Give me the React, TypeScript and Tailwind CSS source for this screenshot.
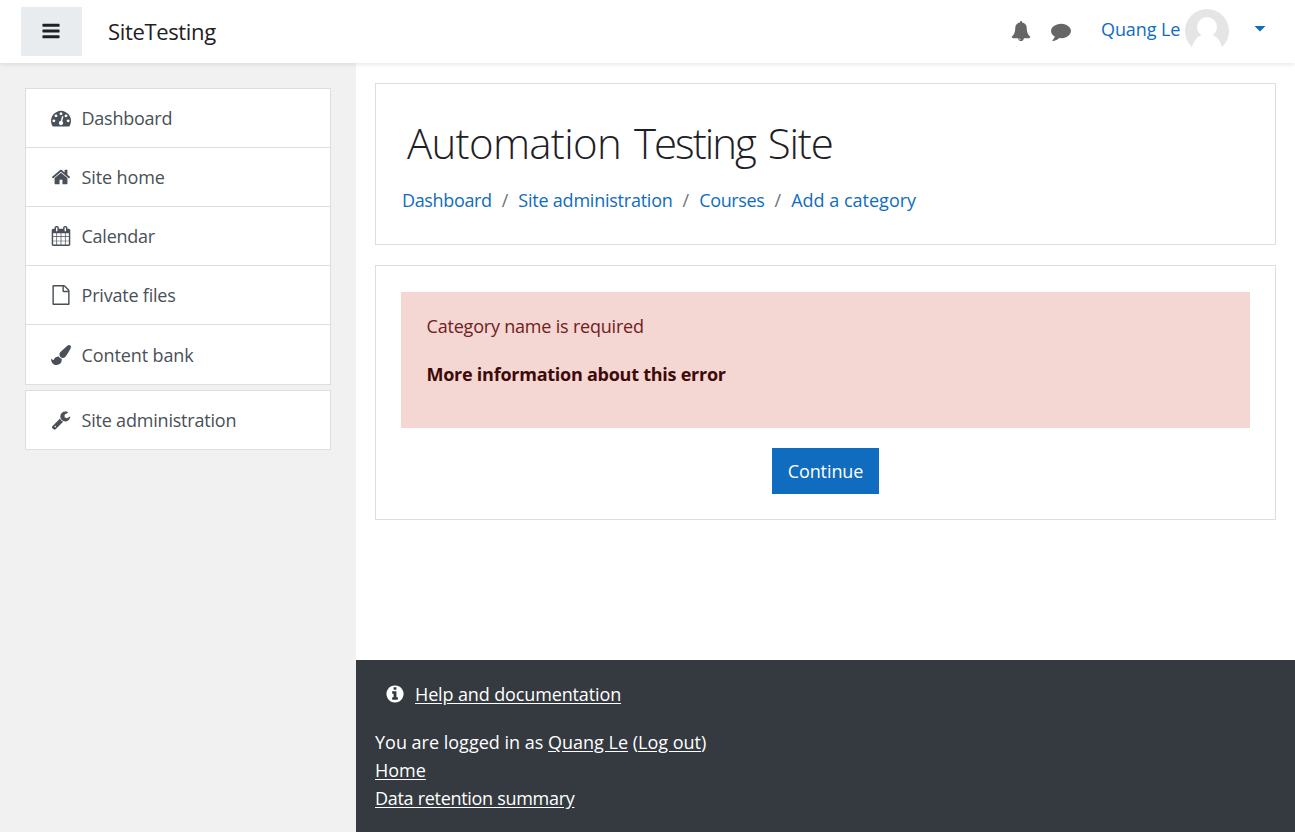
const ICONS = {
  bars: "M1664 1344v128q0 26-19 45t-45 19h-1408q-26 0-45-19t-19-45v-128q0-26 19-45t45-19h1408q26 0 45 19t19 45zm0-512v128q0 26-19 45t-45 19h-1408q-26 0-45-19t-19-45v-128q0-26 19-45t45-19h1408q26 0 45 19t19 45zm0-512v128q0 26-19 45t-45 19h-1408q-26 0-45-19t-19-45v-128q0-26 19-45t45-19h1408q26 0 45 19t19 45z",
  gauge: "M384 1152q0-53-37.5-90.5t-90.5-37.5-90.5 37.5-37.5 90.5 37.5 90.5 90.5 37.5 90.5-37.5 37.5-90.5zm192-448q0-53-37.5-90.5t-90.5-37.5-90.5 37.5-37.5 90.5 37.5 90.5 90.5 37.5 90.5-37.5 37.5-90.5zm428 481l101-382q6-26-7.5-48.5t-38.5-29.5-48 6.5-30 39.5l-101 382q-60 5-107 43.5t-63 98.5q-20 77 20 146t117 89 146-20 89-117q16-60-6-117t-72-91zm660-33q0-53-37.5-90.5t-90.5-37.5-90.5 37.5-37.5 90.5 37.5 90.5 90.5 37.5 90.5-37.5 37.5-90.5zm-640-640q0-53-37.5-90.5t-90.5-37.5-90.5 37.5-37.5 90.5 37.5 90.5 90.5 37.5 90.5-37.5 37.5-90.5zm448 192q0-53-37.5-90.5t-90.5-37.5-90.5 37.5-37.5 90.5 37.5 90.5 90.5 37.5 90.5-37.5 37.5-90.5zm320 448q0 261-141 483-19 29-54 29h-1402q-35 0-54-29-141-221-141-483 0-182 71-348t191-286 286-191 348-71 348 71 286 191 191 286 71 348z",
  home: "M1472 992v480q0 26-19 45t-45 19h-384v-384h-256v384h-384q-26 0-45-19t-19-45v-480q0-1 .5-3t.5-3l575-474 575 474q1 2 1 6zm223-69l-62 74q-8 9-21 11h-3q-13 0-21-7l-692-577-692 577q-12 8-24 7-13-2-21-11l-62-74q-8-10-7-23.5t11-21.5l719-599q32-26 76-26t76 26l244 204v-195q0-14 9-23t23-9h192q14 0 23 9t9 23v408l219 182q10 8 11 21.5t-7 23.5z",
  calendar: "M192 1664h288v-288h-288v288zm352 0h320v-288h-320v288zm-352-352h288v-320h-288v320zm352 0h320v-320h-320v320zm-352-384h288v-288h-288v288zm736 736h320v-288h-320v288zm-384-736h320v-288h-320v288zm768 736h288v-288h-288v288zm-384-352h320v-320h-320v320zm-352-864v-288q0-13-9.5-22.5t-22.5-9.5h-64q-13 0-22.5 9.5t-9.5 22.5v288q0 13 9.5 22.5t22.5 9.5h64q13 0 22.5-9.5t9.5-22.5zm736 864h288v-320h-288v320zm-384-384h320v-288h-320v288zm384 0h288v-288h-288v288zm32-480v-288q0-13-9.5-22.5t-22.5-9.5h-64q-13 0-22.5 9.5t-9.5 22.5v288q0 13 9.5 22.5t22.5 9.5h64q13 0 22.5-9.5t9.5-22.5zm384-64v1280q0 52-38 90t-90 38h-1408q-52 0-90-38t-38-90v-1280q0-52 38-90t90-38h128v-96q0-66 47-113t113-47h64q66 0 113 47t47 113v96h384v-96q0-66 47-113t113-47h64q66 0 113 47t47 113v96h128q52 0 90 38t38 90z",
  file: "M1596 380q28 28 48 76t20 88v1152q0 40-28 68t-68 28h-1344q-40 0-68-28t-28-68v-1600q0-40 28-68t68-28h896q40 0 88 20t76 48zm-444-244v376h376q-10-29-22-41l-313-313q-12-12-41-22zm384 1528v-1024h-416q-40 0-68-28t-28-68v-416h-768v1536h1280z",
  brush: "M1615 0q70 0 122.5 46.5t52.5 116.5q0 63-45 151-332 629-465 752-97 91-218 91-126 0-216.5-92.5t-90.5-219.5q0-128 92-212l638-579q59-54 130-54zm-909 1034q39 76 106.5 130t150.5 76l1 71q4 213-129.5 347t-348.5 134q-123 0-218-46.5t-152.5-127.5-86.5-183-29-220q7 5 41 30t62 44.5 59 36.5 46 17q41 0 55-37 25-66 57.5-112.5t69.5-76 88-47.5 103-25.5 125-10.5z",
  wrench: "M448 1472q0-26-19-45t-45-19-45 19-19 45 19 45 45 19 45-19 19-45zm644-420l-682 682q-37 37-90 37-52 0-91-37l-106-108q-38-36-38-90 0-53 38-91l681-681q39 98 114.5 173.5t173.5 114.5zm634-435q0 39-23 106-47 134-164.5 217.5t-258.5 83.5q-185 0-316.5-131.5t-131.5-316.5 131.5-316.5 316.5-131.5q58 0 121.5 16.5t107.5 46.5q16 11 16 28t-16 28l-293 169v224l193 107q5-3 79-48.5t135.5-81 70.5-35.5q15 0 23.5 10t8.5 25z",
  bell: "M912 1696q0-16-16-16-59 0-101.5-42.5t-42.5-101.5q0-16-16-16t-16 16q0 73 51.5 124.5t124.5 51.5q16 0 16-16zm816-288q0 52-38 90t-90 38h-448q0 106-75 181t-181 75-181-75-75-181h-448q-52 0-90-38t-38-90q50-42 91-88t85-119.5 74.5-158.5 50-206 19.5-260q0-152 117-282.5t307-158.5q-8-19-8-39 0-40 28-68t68-28 68 28 28 68q0 20-8 39 190 28 307 158.5t117 282.5q0 139 19.5 260t50 206 74.5 158.5 85 119.5 91 88z",
  comment: "M1792 896q0 174-120 321.5t-326 233-450 85.5q-70 0-145-8-198 175-460 242-49 14-114 22-17 2-30.5-9t-17.5-29v-1q-3-4-.5-12t2-10 4.5-9.5l6-9 7-8.5 8-9q7-8 31-34.5t34.5-38 31-39.5 32.5-51 27-59 26-76q-157-89-247.5-220t-90.5-281q0-130 71-248.5t191-204.5 286-136.5 348-50.5q244 0 450 85.5t326 233 120 321.5z",
  info: "M1152 1376v-160q0-14-9-23t-23-9h-96v-512q0-14-9-23t-23-9h-320q-14 0-23 9t-9 23v160q0 14 9 23t23 9h96v320h-96q-14 0-23 9t-9 23v160q0 14 9 23t23 9h448q14 0 23-9t9-23zm-128-896v-160q0-14-9-23t-23-9h-192q-14 0-23 9t-9 23v160q0 14 9 23t23 9h192q14 0 23-9t9-23zm640 416q0 209-103 385.5t-279.5 279.5-385.5 103-385.5-103-279.5-279.5-103-385.5 103-385.5 279.5-279.5 385.5-103 385.5 103 279.5 279.5 103 385.5z",
};

type IconName = keyof typeof ICONS;

function Icon({ name, className = "" }: { name: IconName; className?: string }) {
  return (
    <svg viewBox="0 0 1792 1792" fill="currentColor" className={`size-5 shrink-0 overflow-visible ${className}`}>
      <path d={ICONS[name]} />
    </svg>
  );
}

const NAV: { icon: IconName; label: string; className: string; text: string }[] = [
  { icon: "gauge", label: "Dashboard", className: "h-[59px]", text: "tracking-[-0.25px]" },
  { icon: "home", label: "Site home", className: "h-[59px]", text: "tracking-[-0.1px]" },
  { icon: "calendar", label: "Calendar", className: "h-[59px]", text: "tracking-[-0.25px]" },
  { icon: "file", label: "Private files", className: "h-[59px]", text: "tracking-[-0.2px]" },
  { icon: "brush", label: "Content bank", className: "h-[61px] border-b", text: "tracking-[-0.1px]" },
  { icon: "wrench", label: "Site administration", className: "mt-[5px] h-[60px] border-b", text: "tracking-[-0.2px]" },
];

const CRUMBS = [
  { label: "Dashboard", text: "tracking-[-0.35px]" },
  { label: "Site administration", text: "tracking-[-0.23px]" },
  { label: "Courses", text: "tracking-[-0.35px]" },
  { label: "Add a category", text: "tracking-normal" },
];

function Header() {
  return (
    <header className="relative z-10 flex h-[63px] items-start bg-white shadow-[0_2px_4px_rgba(0,0,0,0.08)]">
      <button className="mt-[7px] ml-[21px] flex h-[49px] w-[61px] items-center justify-center bg-[#e9ecef] text-[#1d2125]">
        <Icon name="bars" className="-translate-x-px -translate-y-px" />
      </button>
      <span className="mt-[13px] ml-[26px] text-[22px] leading-9 font-[370] tracking-[-0.35px] text-[#1d2125]">SiteTesting</span>
      <div className="ml-auto flex items-start text-[#666]">
        <Icon name="bell" className="mt-[21px]" />
        <Icon name="comment" className="mt-[21px] ml-5" />
        <span className="mt-[15px] ml-[30px] w-[84px] leading-7 tracking-[-0.1px] whitespace-nowrap text-[#0f6cbf]">Quang Le</span>
        <svg viewBox="0 0 44 44" className="mt-[9px] size-11 shrink-0">
          <circle cx="22" cy="22" r="22" fill="#e5e5e5" />
          <circle cx="22" cy="18" r="10" fill="#fff" />
          <path d="M6.5 38.5C9.5 31 13 26 18 26H26C31 26 34.500 31 37.500 38.500V44H6.500Z" fill="#fff" />
        </svg>
        <svg viewBox="0 0 12 6" className="mt-[26px] mr-[29px] ml-[25px] h-[6px] w-3 shrink-0">
          <path d="M0.5 0h11L6 5.6Z" fill="#0f6cbf" />
        </svg>
      </div>
    </header>
  );
}

function Sidebar() {
  return (
    <nav className="w-[356px] shrink-0 bg-[#f1f1f1] pt-[25px] pr-[25px] pl-[25px]">
      {NAV.map((item) => (
        <a key={item.label} className={`flex items-center border-x border-t border-[#dedede] bg-white pl-[25px] text-[#495057] ${item.className}`}>
          <Icon name={item.icon} />
          <span className={`ml-[10.5px] ${item.text}`}>{item.label}</span>
        </a>
      ))}
    </nav>
  );
}

export default function App() {
  return (
    <div className="flex h-[832px] w-[1295px] flex-col overflow-hidden bg-white font-['Open_Sans',sans-serif] text-[18px] leading-7 font-[370]">
      <Header />
      <div className="flex min-h-0 flex-1">
        <Sidebar />
        <div className="flex min-w-0 flex-1 flex-col">
          <main className="flex-1 pt-5 pr-[19px] pl-[19px]">
            <section className="h-[162px] border border-[#dedede] pt-[33px] pl-[26px]">
              <h1 className="ml-[5px] flex gap-[13px] text-[42px] leading-[52px] font-light text-[#1d2125]">
                <span className="tracking-[-0.7px]">Automation</span>{" "}
                <span className="tracking-[-2px]">Testing</span>{" "}
                <span className="tracking-[-1.2px]">Site</span>
              </h1>
              <div className="mt-[17px] flex text-[#0f6cbf]">
                {CRUMBS.map((c, i) => (
                  <span key={c.label} className="flex">
                    {i > 0 && <span className="mx-[10px] text-[#6a737b]">/</span>}
                    <a className={c.text}>{c.label}</a>
                  </span>
                ))}
              </div>
            </section>
            <section className="mt-5 h-[255px] border border-[#dedede] px-[25px] pt-[26px]">
              <div className="h-[136px] bg-[#f4d6d2] pt-5 pl-[25.5px] text-[#6e211e]">
                <p className="tracking-[-0.2px]">Category name is required</p>
                <p className="mt-5 font-bold tracking-[-0.25px] text-[#3d0a08]">More information about this error</p>
              </div>
              <button className="mx-auto mt-5 block h-[46px] w-[107px] bg-[#0f6cbf] tracking-[-0.1px] text-white">Continue</button>
            </section>
          </main>
          <footer className="h-[172px] bg-[#343a40] pt-5 pl-[19px] text-white">
            <div className="flex items-center pl-[10px]">
              <Icon name="info" />
              <a className="ml-[10px] tracking-[-0.13px] underline underline-offset-2">Help and documentation</a>
            </div>
            <p className="mt-5">
              You are logged in as <a className="underline underline-offset-2">Quang Le</a> (<a className="underline underline-offset-2">Log out</a>)
            </p>
            <p><a className="underline underline-offset-2">Home</a></p>
            <p><a className="tracking-[-0.3px] underline underline-offset-2">Data retention summary</a></p>
          </footer>
        </div>
      </div>
    </div>
  );
}
